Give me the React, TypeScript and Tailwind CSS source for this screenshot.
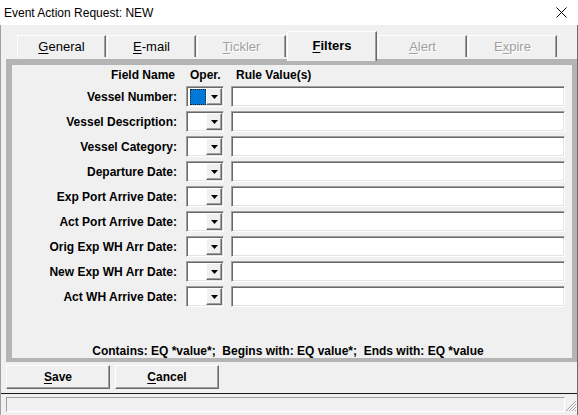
import React from "react";

const rows = [
  "Vessel Number:",
  "Vessel Description:",
  "Vessel Category:",
  "Departure Date:",
  "Exp Port Arrive Date:",
  "Act Port Arrive Date:",
  "Orig Exp WH Arr Date:",
  "New Exp WH Arr Date:",
  "Act WH Arrive Date:",
];

function Tab({
  u,
  rest,
  pre = "",
  disabled = false,
}: {
  u: string;
  rest: string;
  pre?: string;
  disabled?: boolean;
}) {
  return (
    <div
      className={
        "w-[89px] h-[22px] mb-[2px] mr-[1px] bg-[#f0f0f0] border-t border-l border-white border-r border-r-[#696969] shadow-[inset_-1px_0_0_#a0a0a0] flex items-center justify-center text-[13px] leading-none " +
        (disabled ? "text-[#a0a0a0] [text-shadow:1px_1px_0_#ffffff]" : "text-black")
      }
    >
      <span>
        {pre}
        <span className="underline underline-offset-2">{u}</span>
        {rest}
      </span>
    </div>
  );
}

function Combo({ focused }: { focused?: boolean }) {
  return (
    <div className="w-[38px] h-[21px] border-t border-l border-[#a0a0a0] border-b border-r border-b-white border-r-white shadow-[inset_1px_1px_0_#696969,inset_-1px_-1px_0_#e3e3e3] bg-white flex items-stretch p-[1px]">
      <div className="flex-1 flex items-center justify-center pl-[1px]">
        {focused ? (
          <div className="w-[16px] h-[16px] bg-[#0078d7] outline outline-1 outline-dotted outline-[#222] -outline-offset-1" />
        ) : null}
      </div>
      <div className="w-[16px] h-[17px] bg-[#f0f0f0] border-t border-l border-t-white border-l-white border-b border-r border-b-[#696969] border-r-[#696969] shadow-[inset_-1px_-1px_0_#a0a0a0] flex items-center justify-center">
        <svg width="7" height="4" viewBox="0 0 7 4">
          <polygon points="0,0 7,0 3.5,4" fill="#000" />
        </svg>
      </div>
    </div>
  );
}

export default function App() {
  return (
    <div
      className="w-[578px] h-[415px] bg-[#f0f0f0] flex flex-col overflow-hidden"
      style={{ fontFamily: '"Liberation Sans", Arial, sans-serif' }}
    >
      {/* Title bar */}
      <div className="h-[25px] bg-white flex items-center justify-between pl-[4px] pr-[11px] shrink-0">
        <span className="text-[12px] text-black leading-none">Event Action Request: NEW</span>
        <svg width="11" height="11" viewBox="0 0 11 11">
          <path d="M0.5 0.5 L10.5 10.5 M10.5 0.5 L0.5 10.5" stroke="#000" strokeWidth="1" />
        </svg>
      </div>

      <div className="flex-1 flex flex-col border-l border-[#a0a0a0] border-r border-r-[#6d6d6d]">
        {/* Tabs */}
        <div className="h-[34px] flex items-end pl-[16px] shrink-0">
          <Tab u="G" rest="eneral" />
          <Tab u="E" rest="-mail" />
          <Tab u="T" rest="ickler" disabled />
          <div className="relative z-10 w-[90px] h-[30px] -mb-[2px] mr-[1px] bg-[#f0f0f0] border-t border-l border-white border-r border-r-[#696969] shadow-[inset_-1px_0_0_#a0a0a0] flex items-start justify-center pt-[7px] text-[13px] font-bold leading-none text-black">
            <span>
              <span className="underline underline-offset-2">F</span>ilters
            </span>
          </div>
          <Tab u="A" rest="lert" disabled />
          <Tab pre="E" u="x" rest="pire" disabled />
        </div>

        {/* Panel */}
        <div className="w-[571px] h-[303px] ml-[5px] shrink-0 border-t-[6px] border-l-[6px] border-b-[4px] border-r-[5px] border-[#b4b4b4] bg-[#f0f0f0] flex flex-col text-[12px] font-bold text-black">
          <div className="mt-[3px] h-[14px] flex items-center leading-none">
            <div className="w-[163px] text-right">Field Name</div>
            <div className="ml-[11px] w-[38px] pl-[4px]">Oper.</div>
            <div className="ml-[7px] pl-[5px]">Rule Value(s)</div>
          </div>
          <div className="mt-[4px] flex flex-col gap-[4px]">
            {rows.map((r, i) => (
              <div key={r} className="h-[21px] flex items-center">
                <div className="w-[165px] text-right leading-none">{r}</div>
                <div className="ml-[9px]">
                  <Combo focused={i === 0} />
                </div>
                <div className="ml-[7px] w-[334px] h-[21px] bg-white border-t border-l border-[#a0a0a0] border-b border-r border-b-white border-r-white shadow-[inset_1px_1px_0_#696969,inset_-1px_-1px_0_#e3e3e3]" />
              </div>
            ))}
          </div>
          <div className="mt-auto mb-0 h-[14px] leading-[14px] text-center whitespace-pre pr-[8px]">
            {"Contains: EQ *value*;  Begins with: EQ value*;  Ends with: EQ *value"}
          </div>
        </div>

        {/* Buttons */}
        <div className="mt-[3px] h-[24px] flex pl-[5px] shrink-0 text-[12px] font-bold text-black">
          <div className="w-[104px] h-[24px] bg-[#f0f0f0] border-t border-l border-white border-b border-r border-b-[#696969] border-r-[#696969] shadow-[inset_-1px_-1px_0_#a0a0a0] flex items-center justify-center leading-none">
            <span>
              <span className="underline underline-offset-2">S</span>ave
            </span>
          </div>
          <div className="ml-[5px] w-[104px] h-[24px] bg-[#f0f0f0] border-t border-l border-white border-b border-r border-b-[#696969] border-r-[#696969] shadow-[inset_-1px_-1px_0_#a0a0a0] flex items-center justify-center leading-none">
            <span>
              <span className="underline underline-offset-2">C</span>ancel
            </span>
          </div>
        </div>

        <div className="mt-[4px] h-[1px] bg-[#1a1a1a] shrink-0" />

        {/* Status bar */}
        <div className="mt-[3px] h-[18px] flex items-start pl-[5px] shrink-0">
          <div className="w-[559px] h-[15px] border-t border-l border-[#a0a0a0] border-b border-r border-b-white border-r-white" />
          <div className="ml-auto mt-[3px] w-[12px] h-[12px]">
            <svg width="12" height="12" viewBox="0 0 12 12">
              <path d="M11 1 L1 11 M11 4 L4 11 M11 7 L7 11 M11 10 L10 11" stroke="#a0a0a0" strokeWidth="1" />
              <path d="M11.5 2 L2 11.5 M11.5 5 L5 11.5 M11.5 8 L8 11.5" stroke="#ffffff" strokeWidth="1" />
            </svg>
          </div>
        </div>
      </div>
    </div>
  );
}
